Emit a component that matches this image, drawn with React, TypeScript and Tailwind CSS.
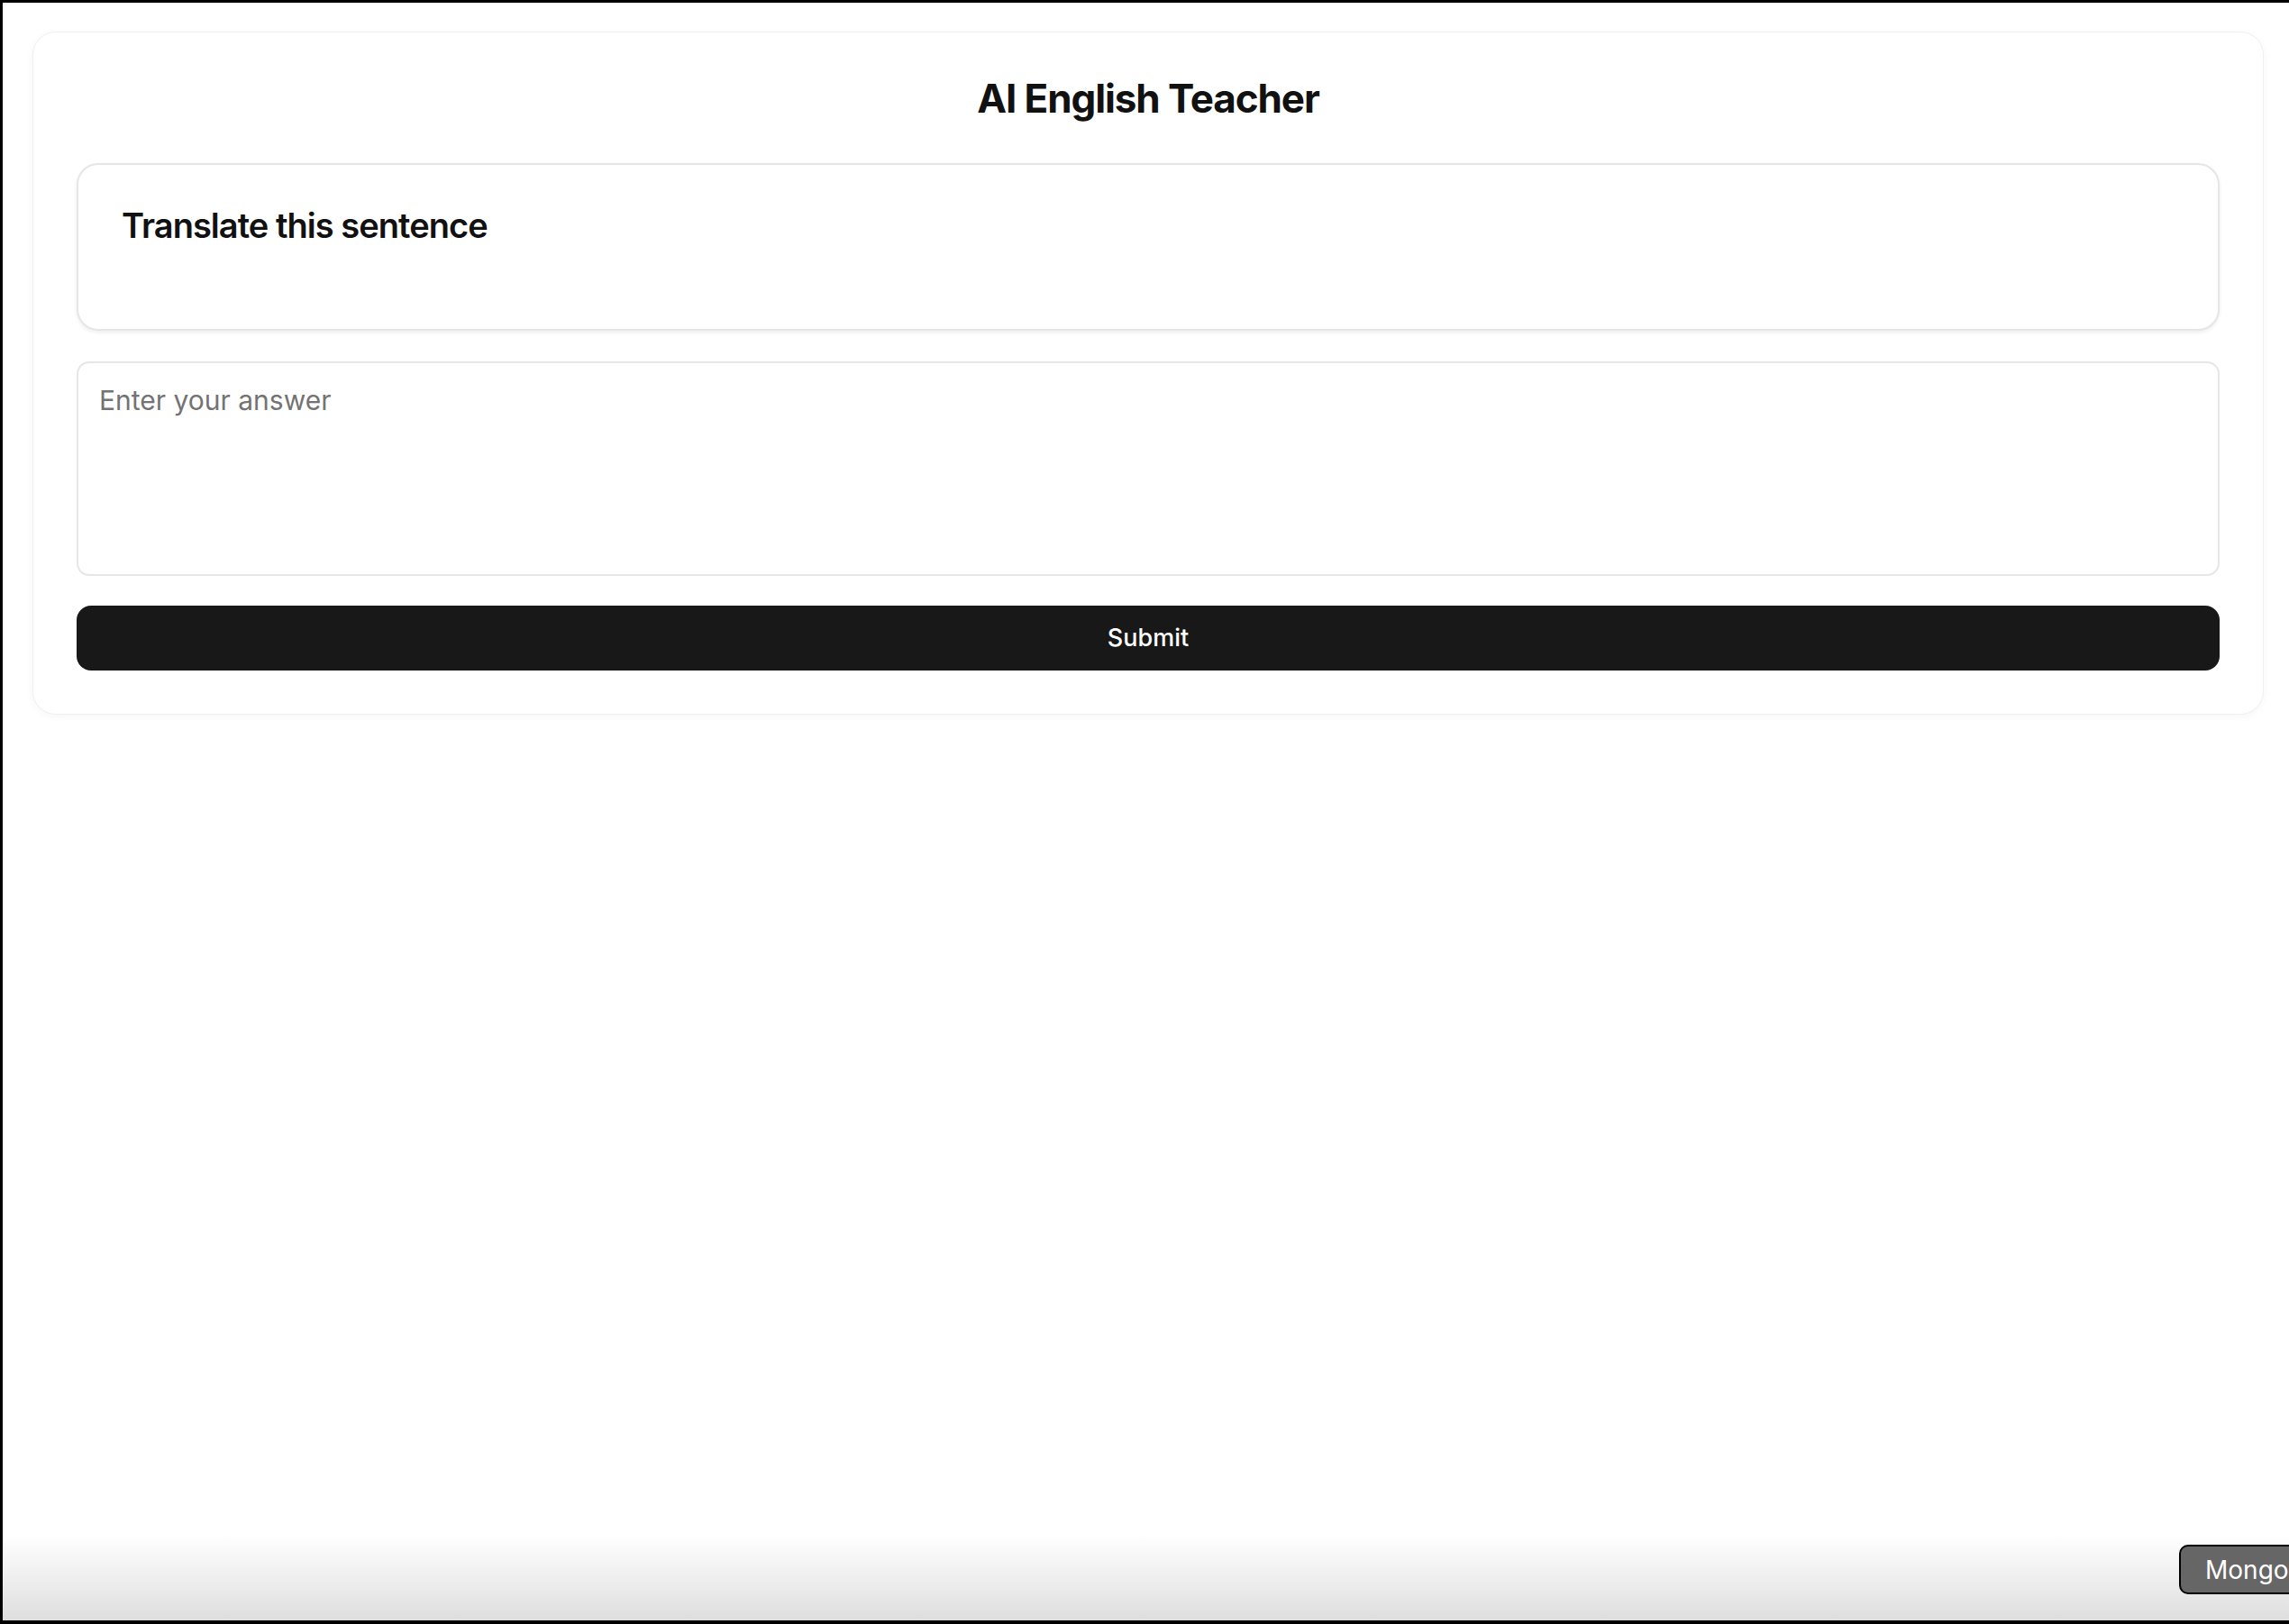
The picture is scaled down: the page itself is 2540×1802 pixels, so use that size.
import React from "react"

const font = { fontFamily: "Inter, 'Noto Sans', sans-serif" }

export default function App() {
  return (
    <div
      className="relative h-[1802px] w-[2540px] overflow-hidden border-l-[3px] border-t-[3px] border-b-[4px] border-black bg-white"
      style={font}
    >
      {/* main card */}
      <div className="ml-[33px] mt-[32px] flex w-[2476px] flex-col rounded-[26px] border border-[#f0f0f0] bg-white p-12 shadow-[0_2px_10px_rgba(0,0,0,0.04)]">
        <h1 className="mb-[47px] text-center text-[44px] font-bold leading-[50px] tracking-tight text-[#111]">
          AI English Teacher
        </h1>

        <div className="h-[186px] rounded-[24px] border-2 border-[#e6e6e6] bg-white px-12 pt-[43px] shadow-[0_2px_4px_rgba(0,0,0,0.07)]">
          <h2 className="text-[38px] font-semibold leading-[48px] tracking-tight text-[#111]">Translate this sentence</h2>
        </div>

        <textarea
          placeholder="Enter your answer"
          className="mt-[34px] h-[238px] w-full resize-none rounded-[14px] border-2 border-[#e6e6e6] bg-white px-[23px] py-[19px] text-[30px] leading-[44px] text-[#111] outline-none placeholder:text-[#737373]"
          style={font}
        />

        <button
          className="mt-[33px] flex h-[72px] w-full items-center justify-center rounded-[16px] bg-[#181818] text-[27px] font-medium text-white"
          style={font}
        >
          Submit
        </button>
      </div>

      {/* bottom shade */}
      <div className="pointer-events-none absolute bottom-0 left-0 h-[95px] w-full bg-gradient-to-b from-transparent to-[#dedede]" />

      {/* floating language pill */}
      <div className="absolute left-[2415px] top-[1711px] flex h-[55px] w-[200px] items-center rounded-[10px] border-2 border-black bg-[#666] pl-[27px] text-[28px] text-white">
        Mongolian
      </div>
    </div>
  )
}
